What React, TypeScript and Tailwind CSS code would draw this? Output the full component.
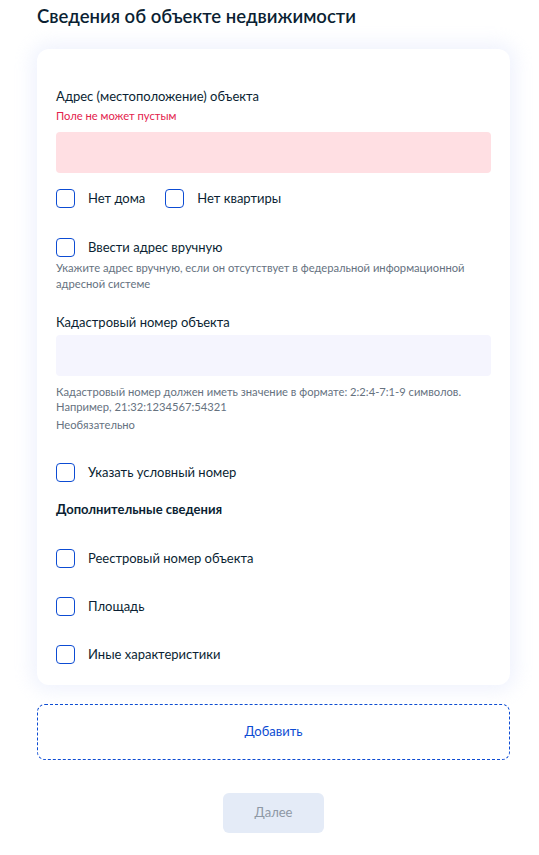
const Checkbox = ({ label }: { label: string }) => (
  <label className="flex items-center">
    <span className="w-[19px] h-[19px] border border-[#0d4cd3] rounded-[4px] bg-white shrink-0" />
    <span className="ml-[13px] text-[13px] leading-[20px] text-[#0b1f33]">{label}</span>
  </label>
)

export default function App() {
  return (
    <div className="min-h-[855px] bg-white pl-[37px] pr-[29px] pt-[3px] pb-[22px] font-['Lato','Noto_Sans',sans-serif] text-[#0b1f33]">
      <h1 className="text-[18.5px] leading-[26px] font-semibold">Сведения об объекте недвижимости</h1>

      {/* Card */}
      <div className="mt-[20px] bg-white rounded-[12px] shadow-[0_0_18px_6px_rgba(230,235,252,0.6)] px-[19px] pt-[37px] pb-[21px]">
        <div className="text-[13px] leading-[20px]">Адрес (местоположение) объекта</div>
        <div className="mt-[2px] text-[11.2px] leading-[16px] text-[#e3224d]">Поле не может пустым</div>
        <div className="mt-[8px] h-[41px] rounded-[4px] bg-[#ffdfe3]" />

        <div className="mt-[15px] flex gap-[20px]">
          <Checkbox label="Нет дома" />
          <Checkbox label="Нет квартиры" />
        </div>

        <div className="mt-[29px]">
          <Checkbox label="Ввести адрес вручную" />
        </div>
        <p className="mt-[3px] text-[11.2px] leading-[16px] text-[#66727f]">
          Укажите адрес вручную, если он отсутствует в федеральной информационной адресной системе
        </p>

        <div className="mt-[20px] text-[13px] leading-[20px]">Кадастровый номер объекта</div>
        <div className="mt-[3px] h-[41px] rounded-[4px] bg-[#f5f5fe]" />
        <p className="mt-[8px] text-[11.2px] leading-[15px] text-[#66727f]">
          Кадастровый номер должен иметь значение в формате: 2:2:4-7:1-9 символов.
          <br />
          Например, 21:32:1234567:54321
        </p>
        <p className="mt-[3px] text-[11.2px] leading-[15px] text-[#66727f]">Необязательно</p>

        <div className="mt-[30px]">
          <Checkbox label="Указать условный номер" />
        </div>

        <div className="mt-[17px] text-[13px] leading-[20px] font-bold">Дополнительные сведения</div>

        <div className="mt-[29px] flex flex-col gap-[28px]">
          <Checkbox label="Реестровый номер объекта" />
          <Checkbox label="Площадь" />
          <Checkbox label="Иные характеристики" />
        </div>
      </div>

      {/* Add */}
      <button className="mt-[19px] w-full h-[56px] rounded-[8px] border border-dashed border-[#0d4cd3] text-[13px] text-[#0d4cd3] bg-white">
        Добавить
      </button>

      <div className="mt-[33px] flex justify-center">
        <button className="w-[101px] h-[40px] rounded-[6px] bg-[#e4ebf7] text-[13px] text-[#8e98a5]">Далее</button>
      </div>
    </div>
  )
}
